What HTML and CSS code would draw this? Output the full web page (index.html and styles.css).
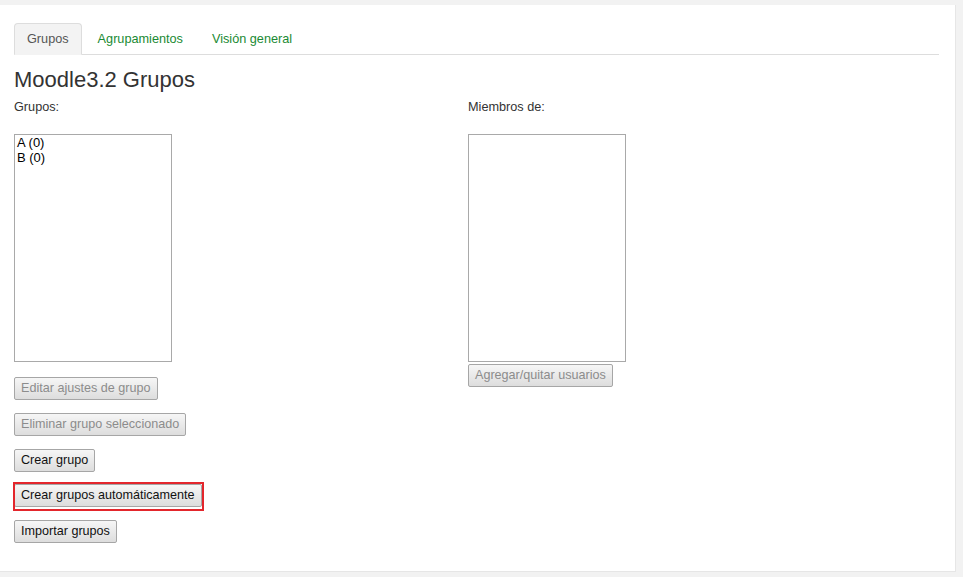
FILE: index.html
```html
<!DOCTYPE html>
<html lang="es">
<head>
<meta charset="utf-8">
<title>Moodle3.2 Grupos</title>
<link rel="stylesheet" href="styles.css">
</head>
<body>
<div class="page">
  <ul class="tabs">
    <li class="tab active"><span class="tab-link">Grupos</span></li>
    <li class="tab"><a class="tab-link" href="#">Agrupamientos</a></li>
    <li class="tab"><a class="tab-link" href="#">Visión general</a></li>
  </ul>
  <h2 class="title">Moodle3.2 Grupos</h2>
  <div class="columns">
    <div class="col">
      <div class="label">Grupos:</div>
      <div class="listbox">
        <div class="option">A (0)</div>
        <div class="option">B (0)</div>
      </div>
      <div class="actions">
        <button class="btn" disabled>Editar ajustes de grupo</button>
        <button class="btn" disabled>Eliminar grupo seleccionado</button>
        <button class="btn">Crear grupo</button>
        <div class="highlight-wrap">
          <button class="btn">Crear grupos automáticamente</button>
          <span class="highlight"></span>
        </div>
        <button class="btn">Importar grupos</button>
      </div>
    </div>
    <div class="col">
      <div class="label">Miembros de:</div>
      <div class="listbox"></div>
      <div class="actions-right">
        <button class="btn" disabled>Agregar/quitar usuarios</button>
      </div>
    </div>
  </div>
</div>
</body>
</html>
```

FILE: styles.css
```css
html, body {
  margin: 0;
  padding: 0;
}
body {
  background: #f2f2f2;
  font-family: "Liberation Sans", Arial, Helvetica, sans-serif;
  font-size: 12.7px;
  color: #333;
}
.page {
  margin-top: 5px;
  width: 956px;
  height: 567px;
  box-sizing: border-box;
  background: #fff;
  border-right: 1px solid #e6e6e6;
  border-bottom: 1px solid #e6e6e6;
  padding: 18px 16px 0 14px;
}
.tabs {
  list-style: none;
  margin: 0;
  padding: 0;
  display: flex;
  border-bottom: 1px solid #dddddd;
}
.tab {
  margin: 0 3px -1px 0;
}
.tab-link {
  display: block;
  padding: 8px 12px;
  line-height: 14px;
  border: 1px solid transparent;
  border-radius: 4px 4px 0 0;
  color: #1a8a33;
  text-decoration: none;
}
.tab.active .tab-link {
  color: #555;
  background: #f3f3f3;
  border-color: #dddddd #dddddd transparent;
}
.title {
  margin: 13px 0 0;
  font-size: 22px;
  line-height: 24px;
  font-weight: normal;
  color: #333;
}
.columns {
  display: grid;
  grid-template-columns: 454px 1fr;
  margin-top: 5px;
}
.label {
  line-height: 20px;
  color: #333;
}
.listbox {
  margin-top: 17px;
  width: 158px;
  height: 228px;
  box-sizing: border-box;
  border: 1px solid #a9a9a9;
  padding: 0 2px;
  background: #fff;
  color: #000;
  font-size: 13px;
}
.option {
  line-height: 15px;
}
.actions {
  display: flex;
  flex-direction: column;
  align-items: flex-start;
  gap: 12.75px;
  margin-top: 15px;
}
.actions-right {
  margin-top: 2px;
}
.btn {
  height: 23px;
  box-sizing: border-box;
  padding: 0 6px;
  margin: 0;
  font-family: "Liberation Sans", Arial, Helvetica, sans-serif;
  font-size: 12.6px;
  line-height: 21px;
  color: #111;
  background: linear-gradient(#f6f6f6, #dddddd);
  border: 1px solid #a6a6a6;
  border-radius: 2px;
  cursor: pointer;
}
.btn:disabled {
  color: #8c8c8c;
  cursor: default;
}
.highlight-wrap {
  position: relative;
}
.highlight {
  position: absolute;
  left: -1px;
  top: -2px;
  right: -2px;
  bottom: -4px;
  border: 2px solid #e3262c;
  pointer-events: none;
}
```
